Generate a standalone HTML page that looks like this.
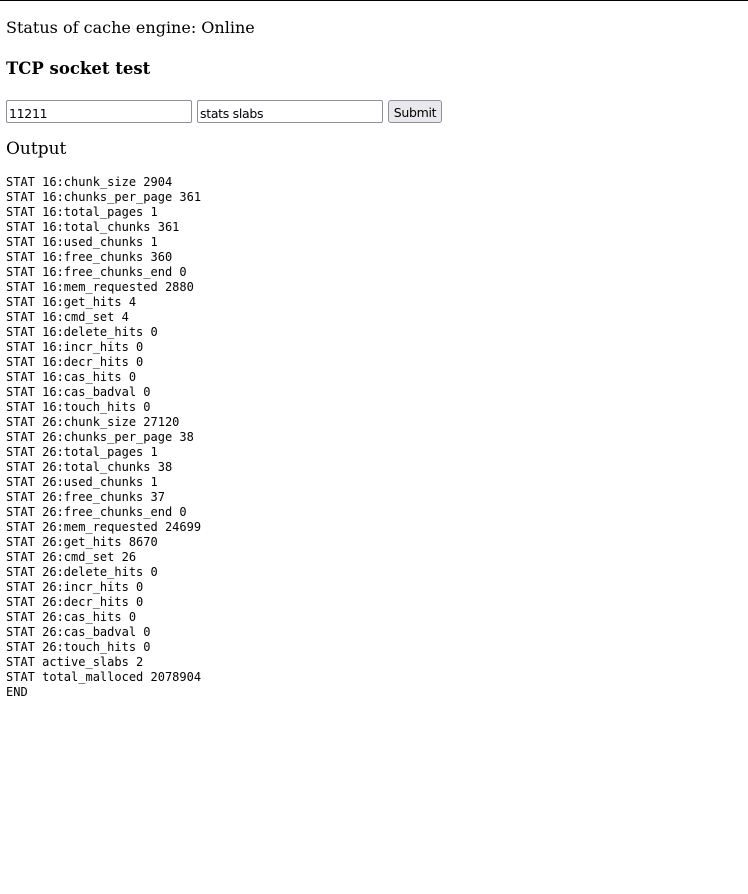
<!DOCTYPE html>
<html><head><style>
html,body{margin:0;padding:0;background:#fff;}
body{width:748px;height:894px;position:relative;border-top:1px solid #000;box-sizing:border-box;font-family:"DejaVu Serif",serif;color:#000;}
.a{position:absolute;left:6px;margin:0;white-space:nowrap;}
#s{top:17px;font-size:16px;}
#h{top:58px;font-size:16.5px;font-weight:bold;}
#o{top:138px;font-size:17px;}
input,button{position:absolute;font-family:"DejaVu Sans",sans-serif;font-size:12.5px;letter-spacing:-0.3px;box-sizing:border-box;margin:0;}
input{height:23px;border:1px solid #8f8f9d;border-radius:2px;padding:3px 2px 0;top:99px;width:186px;}
button{top:99px;left:388px;height:23px;width:54px;border:1px solid #8f8f9d;border-radius:3px;background:#e9e9ed;padding:2px 0 0;}
pre{position:absolute;left:6px;top:174px;margin:0;font-family:"DejaVu Sans Mono",monospace;font-size:12px;line-height:15px;}
</style></head><body>
<p class="a" id="s">Status of cache engine: Online</p>
<h3 class="a" id="h">TCP socket test</h3>
<input style="left:6px" value="11211"><input style="left:197px" value="stats slabs"><button>Submit</button>
<p class="a" id="o">Output</p>
<pre>STAT 16:chunk_size 2904
STAT 16:chunks_per_page 361
STAT 16:total_pages 1
STAT 16:total_chunks 361
STAT 16:used_chunks 1
STAT 16:free_chunks 360
STAT 16:free_chunks_end 0
STAT 16:mem_requested 2880
STAT 16:get_hits 4
STAT 16:cmd_set 4
STAT 16:delete_hits 0
STAT 16:incr_hits 0
STAT 16:decr_hits 0
STAT 16:cas_hits 0
STAT 16:cas_badval 0
STAT 16:touch_hits 0
STAT 26:chunk_size 27120
STAT 26:chunks_per_page 38
STAT 26:total_pages 1
STAT 26:total_chunks 38
STAT 26:used_chunks 1
STAT 26:free_chunks 37
STAT 26:free_chunks_end 0
STAT 26:mem_requested 24699
STAT 26:get_hits 8670
STAT 26:cmd_set 26
STAT 26:delete_hits 0
STAT 26:incr_hits 0
STAT 26:decr_hits 0
STAT 26:cas_hits 0
STAT 26:cas_badval 0
STAT 26:touch_hits 0
STAT active_slabs 2
STAT total_malloced 2078904
END</pre>
</body></html>
